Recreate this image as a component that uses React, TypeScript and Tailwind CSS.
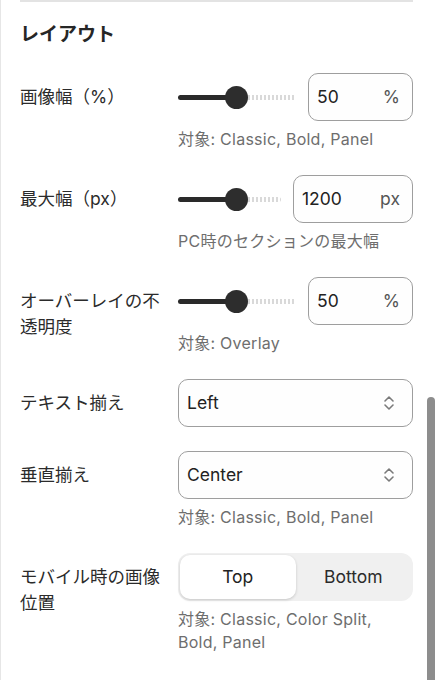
import React from "react";

const FONT = { fontFamily: 'Inter, "Noto Sans CJK JP", sans-serif' };

function Chevrons() {
  return (
    <svg width="14" height="16" viewBox="0 0 14 16" fill="none" stroke="#7a7a7a" strokeWidth="1.6" strokeLinecap="round" strokeLinejoin="round">
      <path d="M3 6 L7 2 L11 6" />
      <path d="M3 10 L7 14 L11 10" />
    </svg>
  );
}

function Slider({ pos }: { pos: number }) {
  return (
    <div className="relative h-[48px] flex-1 min-w-0">
      <div
        className="absolute top-[21.5px] h-[5px] right-0 rounded-r-full bg-[repeating-linear-gradient(90deg,#d9d9d9_0_2px,transparent_2px_4px)]"
        style={{ left: pos }}
      />
      <div className="absolute top-[21.5px] left-0 h-[5px] rounded-full bg-[#2a2a2a]" style={{ width: pos }} />
      <div
        className="absolute top-[12.5px] h-[23px] w-[23px] rounded-full bg-[#2d2d2d]"
        style={{ left: pos - 11.5 }}
      />
    </div>
  );
}

function NumInput({ value, unit, w }: { value: string; unit: string; w: string }) {
  return (
    <div className={`${w} h-[48px] shrink-0 flex items-center justify-between rounded-[10px] border border-[#9e9e9e] bg-[#fefefe] pl-[8px] pr-[12px]`}>
      <span className="text-[17.5px] text-[#222]">{value}</span>
      <span className="text-[17.5px] text-[#555]">{unit}</span>
    </div>
  );
}

function Helper({ children }: { children: React.ReactNode }) {
  return <div className="mt-[7px] text-[16px] tracking-[0.25px] leading-[23px] text-[#6e6e6e]">{children}</div>;
}

function Row({ label, children }: { label: React.ReactNode; children: React.ReactNode }) {
  return (
    <div className="flex items-start gap-[12px]">
      <div className="w-[146px] shrink-0 pt-[11px] text-[17.5px] leading-[26px] text-[#2b2b2b]">{label}</div>
      <div className="flex-1 min-w-0">{children}</div>
    </div>
  );
}

function Select({ value }: { value: string }) {
  return (
    <div className="h-[48px] flex items-center justify-between rounded-[10px] border border-[#9e9e9e] bg-[#fefefe] pl-[8px] pr-[16px]">
      <span className="text-[17.5px] text-[#222]">{value}</span>
      <Chevrons />
    </div>
  );
}

export default function App() {
  return (
    <div className="relative w-[435px] h-[680px] overflow-hidden bg-white border-l border-[#e6e6e6]" style={FONT}>
      <div className="pl-[19px] pr-[22px]">
        <div className="h-[2px] bg-[#e3e3e3]" />
        <div className="pt-[20px] text-[19px] leading-[26px] font-bold text-[#262626]">レイアウト</div>
        <div className="mt-[25px] flex flex-col gap-[24px]">
          <Row label="画像幅（%）">
            <div className="flex items-center gap-[12px]">
              <Slider pos={58} />
              <NumInput value="50" unit="%" w="w-[105px]" />
            </div>
            <Helper>対象: Classic, Bold, Panel</Helper>
          </Row>
          <Row label="最大幅（px）">
            <div className="flex items-center gap-[12px]">
              <Slider pos={58} />
              <NumInput value="1200" unit="px" w="w-[120px]" />
            </div>
            <Helper>PC時のセクションの最大幅</Helper>
          </Row>
          <Row label="オーバーレイの不透明度">
            <div className="flex items-center gap-[12px]">
              <Slider pos={58} />
              <NumInput value="50" unit="%" w="w-[105px]" />
            </div>
            <Helper>対象: Overlay</Helper>
          </Row>
          <Row label="テキスト揃え">
            <Select value="Left" />
          </Row>
          <Row label="垂直揃え">
            <Select value="Center" />
            <Helper>対象: Classic, Bold, Panel</Helper>
          </Row>
          <Row label="モバイル時の画像位置">
            <div className="h-[48px] grid grid-cols-2 rounded-[12px] bg-[#f0f0f0] p-[2px]">
              <div className="flex items-center justify-center rounded-[10px] bg-white shadow-[0_1px_3px_rgba(0,0,0,0.18)] text-[17.5px] text-[#222]">Top</div>
              <div className="flex items-center justify-center text-[17.5px] text-[#2b2b2b]">Bottom</div>
            </div>
            <Helper>対象: Classic, Color Split, Bold, Panel</Helper>
          </Row>
        </div>
      </div>
      <div className="absolute right-0 top-[397px] bottom-0 w-[8px] rounded-t-[4px] bg-[#8d8d8d]" />
    </div>
  );
}
